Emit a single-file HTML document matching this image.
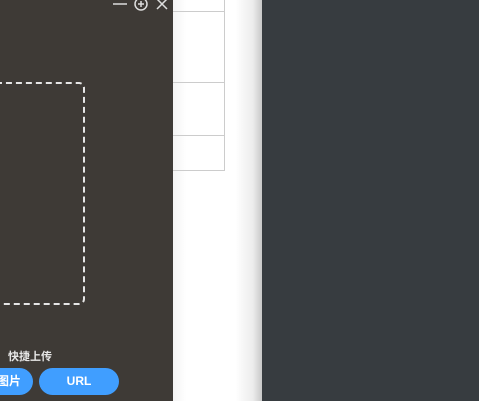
<!DOCTYPE html>
<html><head><meta charset="utf-8"><style>
body{margin:0;width:479px;height:401px;overflow:hidden;position:relative;background:#373c40;font-family:"Liberation Sans","Noto Sans CJK SC",sans-serif}
.white{position:absolute;left:173px;top:0;width:89px;height:401px;background:linear-gradient(to right,#f4f4f4 0,#fff 15%,#fff 70%,#ececec 90%,#c8c8c8 100%)}
.tbl{position:absolute;left:173px;top:-1px;width:51px;height:171px;border-right:1px solid #ccc;border-bottom:1px solid #ccc}
.h{position:absolute;left:173px;width:51px;height:1px;background:#ccc}
.panel{position:absolute;left:0;top:0;width:173px;height:401px;background:#3e3a36}
.dash{position:absolute;left:-20px;top:82px;width:101px;height:219px;border:2px dashed #e6e6e6;border-radius:6px}
.btn{position:absolute;top:368px;height:27px;border-radius:14px;background:#409eff;color:#fff;font-size:12px;font-weight:bold;text-align:center;line-height:27px}
</style></head><body>
<div class="white"></div>
<div class="tbl"></div>
<div class="h" style="top:11px"></div>
<div class="h" style="top:82px"></div>
<div class="h" style="top:135px"></div>
<div class="panel">
<div class="dash"></div>
<div style="position:absolute;left:8px;top:348px;color:#e6e6e6;font-size:11px;font-weight:bold">快捷上传</div>
<div class="btn" style="left:-30px;width:63px;text-align:right;padding-right:0"><span style="margin-right:12px">图片</span></div>
<div class="btn" style="left:39px;width:80px">URL</div>
<svg style="position:absolute;left:112px;top:0" width="60" height="12" viewBox="0 0 60 12">
<path d="M1 4H15" stroke="#ddd" stroke-width="1.5"/>
<circle cx="29" cy="4" r="6" stroke="#ddd" stroke-width="1.5" fill="none"/>
<path d="M29 1V7M26 4H32" stroke="#ddd" stroke-width="1.5"/>
<path d="M45 -1L55 9M55 -1L45 9" stroke="#ddd" stroke-width="1.5"/>
</svg>
</div>
</body></html>
